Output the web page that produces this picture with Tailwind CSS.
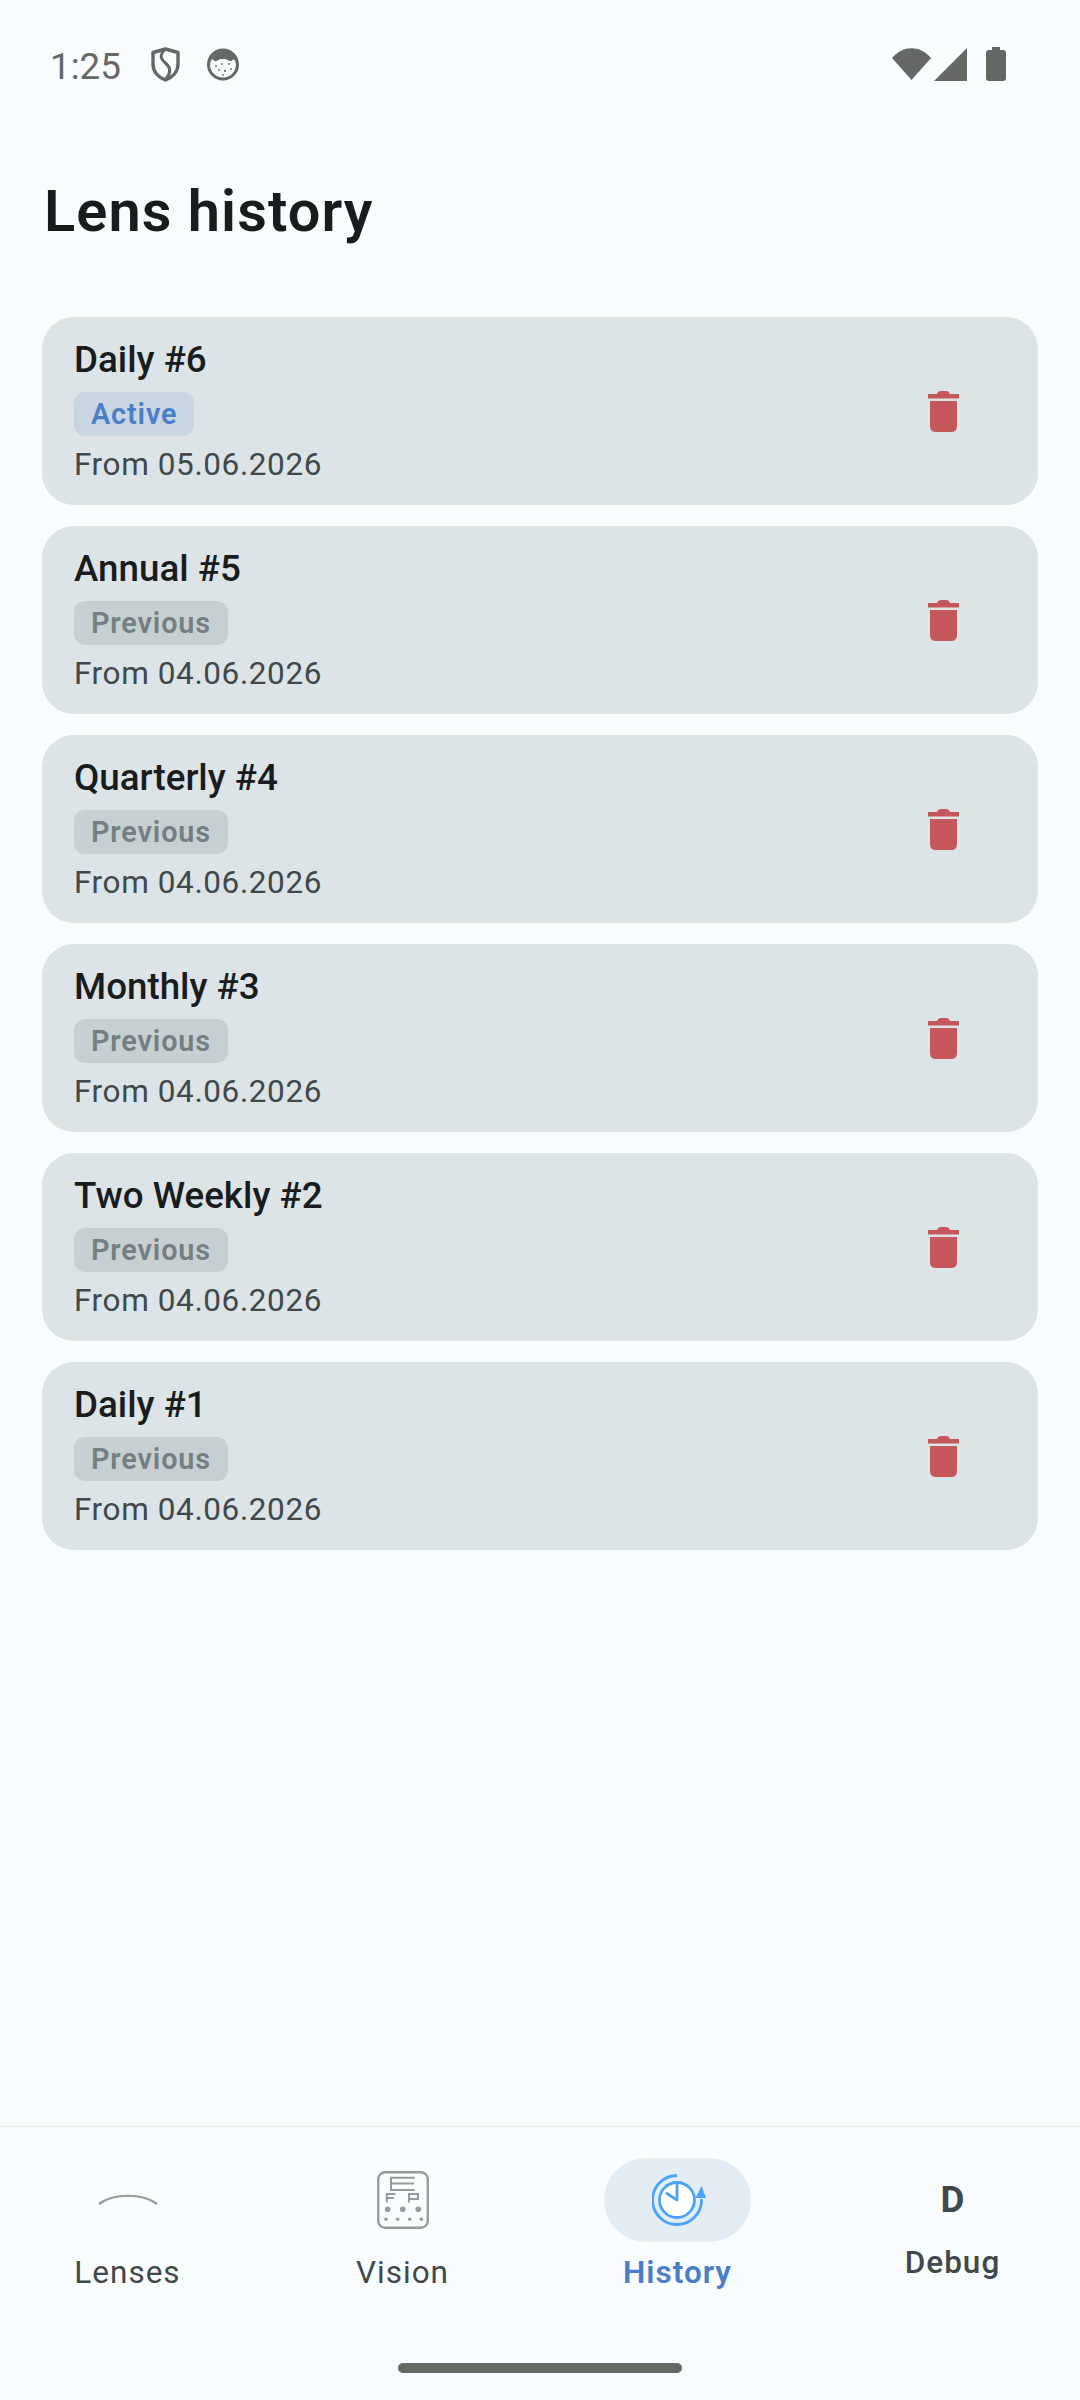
<!DOCTYPE html>
<html lang="en">
<head>
	<meta charset="UTF-8">
	<meta name="viewport" content="width=device-width, initial-scale=1.0">
	<title>Lens history</title>
	<script src="https://cdn.jsdelivr.net/npm/@tailwindcss/browser@4"></script>
</head>
<body class="bg-[#fafdff] font-['Roboto',sans-serif]">
	<div class="flex flex-col h-[2400px] w-[1080px] overflow-hidden">

		<!-- Status bar -->
		<div class="flex items-center h-[34px] mt-[47px] pl-[50px] pr-[74px] text-[#666866]">
			<span class="text-[36.75px] leading-[36px] mt-[6px] w-[101px]">1:25</span>
			<svg class="w-[29px] h-[35px]" viewBox="0 0 29 35">
				<path d="M14.5 2 L27 5.5 V17 C27 25 21 30.5 14.5 33 C8 30.5 2 25 2 17 V5.5 Z" fill="none" stroke="#666866" stroke-width="3.4" stroke-linejoin="round"/>
				<path d="M14 2.5 C7 9 11 13 15 16.5 C20 21 20 26 15 32" fill="none" stroke="#666866" stroke-width="3"/>
			</svg>
			<svg class="w-[32px] h-[33px] ml-[27px]" viewBox="0 0 32 33">
				<circle cx="16" cy="16.5" r="14.5" fill="#fafdff" stroke="#666866" stroke-width="3"/>
				<path d="M3 16 A13 13 0 0 1 29 16 C28 13 27 10 25.5 12 C24 14 22 13 21 12 C19 10.5 13 10.5 11 12 C10 13 8 14 6.5 12 C5 10 4 13 3 16 Z" fill="#666866"/>
				<g fill="#777">
					<circle cx="9" cy="18" r="1"/><circle cx="15" cy="16" r="1"/><circle cx="22" cy="16" r="1"/><circle cx="12" cy="22" r="1"/><circle cx="18" cy="23" r="1.2"/><circle cx="24" cy="21" r="1"/><circle cx="16" cy="27" r="1"/>
				</g>
			</svg>
			<div class="flex-1"></div>
			<svg class="w-[39px] h-[32px]" viewBox="0 0 39 32">
				<path d="M0 10 C11 -3 28 -3 39 10 L19.5 32 Z" fill="#666866"/>
			</svg>
			<svg class="w-[33px] h-[33px] ml-[3px]" viewBox="0 0 33 33">
				<path d="M33 0 V33 H0 Z" fill="#666866"/>
			</svg>
			<svg class="w-[20px] h-[34px] ml-[19px]" viewBox="0 0 20 34">
				<path d="M6 0 H14 V3 H17 Q20 3 20 6 V31 Q20 34 17 34 H3 Q0 34 0 31 V6 Q0 3 3 3 H6 Z" fill="#666866"/>
			</svg>
		</div>

		<main class="flex-1 flex flex-col">
			<h1 class="text-[57.75px] leading-[70px] font-semibold tracking-[1.05px] text-[#191c1d] ml-[44px] mt-[95px] mb-[71px]">Lens history</h1>

			<div class="flex flex-col gap-[21px] mx-[42px]">
				<div class="flex items-center justify-between bg-[#dce4e7] rounded-[32px] pl-[32px] pr-[79px] pt-[19px] pb-[19px]">
					<div class="flex flex-col items-start gap-[8px]">
						<p class="text-[36.75px] leading-[48px] font-medium text-[#191c1d]">Daily #6</p>
						<span class="h-[44px] px-[17px] rounded-[11px] bg-[#c9d6e1] text-[#4a7fc7] text-[28.875px] leading-[44px] font-semibold tracking-[0.85px]">Active</span>
						<p class="text-[31.5px] leading-[42px] tracking-[0.6px] text-[#41484b]">From 05.06.2026</p>
					</div>
					<svg class="w-[31px] h-[41px]" viewBox="0 0 31 41" fill="#c5575a"><path d="M0 3 H9 Q10 0 13 0 H18 Q21 0 22 3 H31 V7.5 H0 Z"/><path d="M2 10 H29 V35 Q29 41 23 41 H8 Q2 41 2 35 Z"/></svg>
				</div>

				<div class="flex items-center justify-between bg-[#dce4e7] rounded-[32px] pl-[32px] pr-[79px] pt-[19px] pb-[19px]">
					<div class="flex flex-col items-start gap-[8px]">
						<p class="text-[36.75px] leading-[48px] font-medium text-[#191c1d]">Annual #5</p>
						<span class="h-[44px] px-[17px] rounded-[11px] bg-[#c6d0d3] text-[#757e81] text-[28.875px] leading-[44px] font-semibold tracking-[0.85px]">Previous</span>
						<p class="text-[31.5px] leading-[42px] tracking-[0.6px] text-[#41484b]">From 04.06.2026</p>
					</div>
					<svg class="w-[31px] h-[41px]" viewBox="0 0 31 41" fill="#c5575a"><path d="M0 3 H9 Q10 0 13 0 H18 Q21 0 22 3 H31 V7.5 H0 Z"/><path d="M2 10 H29 V35 Q29 41 23 41 H8 Q2 41 2 35 Z"/></svg>
				</div>

				<div class="flex items-center justify-between bg-[#dce4e7] rounded-[32px] pl-[32px] pr-[79px] pt-[19px] pb-[19px]">
					<div class="flex flex-col items-start gap-[8px]">
						<p class="text-[36.75px] leading-[48px] font-medium text-[#191c1d]">Quarterly #4</p>
						<span class="h-[44px] px-[17px] rounded-[11px] bg-[#c6d0d3] text-[#757e81] text-[28.875px] leading-[44px] font-semibold tracking-[0.85px]">Previous</span>
						<p class="text-[31.5px] leading-[42px] tracking-[0.6px] text-[#41484b]">From 04.06.2026</p>
					</div>
					<svg class="w-[31px] h-[41px]" viewBox="0 0 31 41" fill="#c5575a"><path d="M0 3 H9 Q10 0 13 0 H18 Q21 0 22 3 H31 V7.5 H0 Z"/><path d="M2 10 H29 V35 Q29 41 23 41 H8 Q2 41 2 35 Z"/></svg>
				</div>

				<div class="flex items-center justify-between bg-[#dce4e7] rounded-[32px] pl-[32px] pr-[79px] pt-[19px] pb-[19px]">
					<div class="flex flex-col items-start gap-[8px]">
						<p class="text-[36.75px] leading-[48px] font-medium text-[#191c1d]">Monthly #3</p>
						<span class="h-[44px] px-[17px] rounded-[11px] bg-[#c6d0d3] text-[#757e81] text-[28.875px] leading-[44px] font-semibold tracking-[0.85px]">Previous</span>
						<p class="text-[31.5px] leading-[42px] tracking-[0.6px] text-[#41484b]">From 04.06.2026</p>
					</div>
					<svg class="w-[31px] h-[41px]" viewBox="0 0 31 41" fill="#c5575a"><path d="M0 3 H9 Q10 0 13 0 H18 Q21 0 22 3 H31 V7.5 H0 Z"/><path d="M2 10 H29 V35 Q29 41 23 41 H8 Q2 41 2 35 Z"/></svg>
				</div>

				<div class="flex items-center justify-between bg-[#dce4e7] rounded-[32px] pl-[32px] pr-[79px] pt-[19px] pb-[19px]">
					<div class="flex flex-col items-start gap-[8px]">
						<p class="text-[36.75px] leading-[48px] font-medium text-[#191c1d]">Two Weekly #2</p>
						<span class="h-[44px] px-[17px] rounded-[11px] bg-[#c6d0d3] text-[#757e81] text-[28.875px] leading-[44px] font-semibold tracking-[0.85px]">Previous</span>
						<p class="text-[31.5px] leading-[42px] tracking-[0.6px] text-[#41484b]">From 04.06.2026</p>
					</div>
					<svg class="w-[31px] h-[41px]" viewBox="0 0 31 41" fill="#c5575a"><path d="M0 3 H9 Q10 0 13 0 H18 Q21 0 22 3 H31 V7.5 H0 Z"/><path d="M2 10 H29 V35 Q29 41 23 41 H8 Q2 41 2 35 Z"/></svg>
				</div>

				<div class="flex items-center justify-between bg-[#dce4e7] rounded-[32px] pl-[32px] pr-[79px] pt-[19px] pb-[19px]">
					<div class="flex flex-col items-start gap-[8px]">
						<p class="text-[36.75px] leading-[48px] font-medium text-[#191c1d]">Daily #1</p>
						<span class="h-[44px] px-[17px] rounded-[11px] bg-[#c6d0d3] text-[#757e81] text-[28.875px] leading-[44px] font-semibold tracking-[0.85px]">Previous</span>
						<p class="text-[31.5px] leading-[42px] tracking-[0.6px] text-[#41484b]">From 04.06.2026</p>
					</div>
					<svg class="w-[31px] h-[41px]" viewBox="0 0 31 41" fill="#c5575a"><path d="M0 3 H9 Q10 0 13 0 H18 Q21 0 22 3 H31 V7.5 H0 Z"/><path d="M2 10 H29 V35 Q29 41 23 41 H8 Q2 41 2 35 Z"/></svg>
				</div>
			</div>
		</main>

		<!-- Bottom navigation -->
		<nav class="border-t border-[#e6e8ec] pt-[31px] h-[274px]">
			<div class="grid grid-cols-4 gap-x-[20px]">
				<div class="flex flex-col items-center">
					<div class="h-[84px] flex items-center justify-center">
						<svg class="w-[60px] h-[12px] mb-[2px]" viewBox="0 0 60 12"><path d="M1 11 C16 0 44 0 59 11" fill="none" stroke="#9a9a9a" stroke-width="2.2"/></svg>
					</div>
					<span class="mt-[10px] text-[31.5px] leading-[42px] tracking-[1px] text-[#41484b]">Lenses</span>
				</div>
				<div class="flex flex-col items-center">
					<div class="h-[84px] flex items-center justify-center">
						<svg class="w-[52px] h-[58px]" viewBox="0 0 52 58" fill="none" stroke="#9a9a9a">
							<rect x="1.2" y="1.2" width="49.6" height="55.6" rx="7" stroke-width="2.4"/>
							<path d="M37.7 6.7 H14 V19 H37.7 M14 12.5 H37" stroke-width="2"/>
							<path d="M9.8 31.5 V23 H18.5 M9.8 27 H17" stroke-width="2"/>
							<path d="M32 31.5 V23 H41 V28 H32" stroke-width="2"/>
							<g fill="#9a9a9a" stroke="none">
								<circle cx="10.7" cy="38.3" r="2.8"/><circle cx="25.7" cy="38.3" r="2.8"/><circle cx="41.3" cy="38.3" r="2.8"/>
								<circle cx="9" cy="48.3" r="1.8"/><circle cx="20.7" cy="48.3" r="1.8"/><circle cx="32.7" cy="48.3" r="1.8"/><circle cx="44.3" cy="48.3" r="1.8"/>
							</g>
						</svg>
					</div>
					<span class="mt-[10px] text-[31.5px] leading-[42px] tracking-[1px] text-[#41484b]">Vision</span>
				</div>
				<div class="flex flex-col items-center">
					<div class="h-[84px] w-[147px] rounded-full bg-[#e4ecf4] flex items-center justify-center">
						<svg class="w-[54px] h-[52px] ml-[3px]" viewBox="0 0 54 52" fill="none" stroke="#4da3f7">
							<circle cx="25" cy="26" r="17.5" fill="#fff" stroke-width="2.8"/>
							<path d="M25 1.5 A24.5 24.5 0 1 0 49.5 25" stroke-width="2.8"/>
							<path d="M43.5 24 L49.5 12 L54 24 Z" fill="#4da3f7" stroke="none"/>
							<path d="M25 11 V26 L15 19.5" stroke-width="2.8" stroke-linecap="round" stroke-linejoin="round"/>
						</svg>
					</div>
					<span class="mt-[10px] text-[31.5px] leading-[42px] tracking-[1px] font-semibold text-[#4a7fc7]">History</span>
				</div>
				<div class="flex flex-col items-center">
					<div class="h-[84px] flex items-center justify-center text-[36.75px] font-bold text-[#41484b]">D</div>
					<span class="text-[31.5px] leading-[42px] tracking-[1px] font-medium text-[#41484b]">Debug</span>
				</div>
			</div>
			<div class="mt-[69px] mx-auto w-[284px] h-[10px] rounded-full bg-[#666866]"></div>
		</nav>
	</div>
</body>
</html>
